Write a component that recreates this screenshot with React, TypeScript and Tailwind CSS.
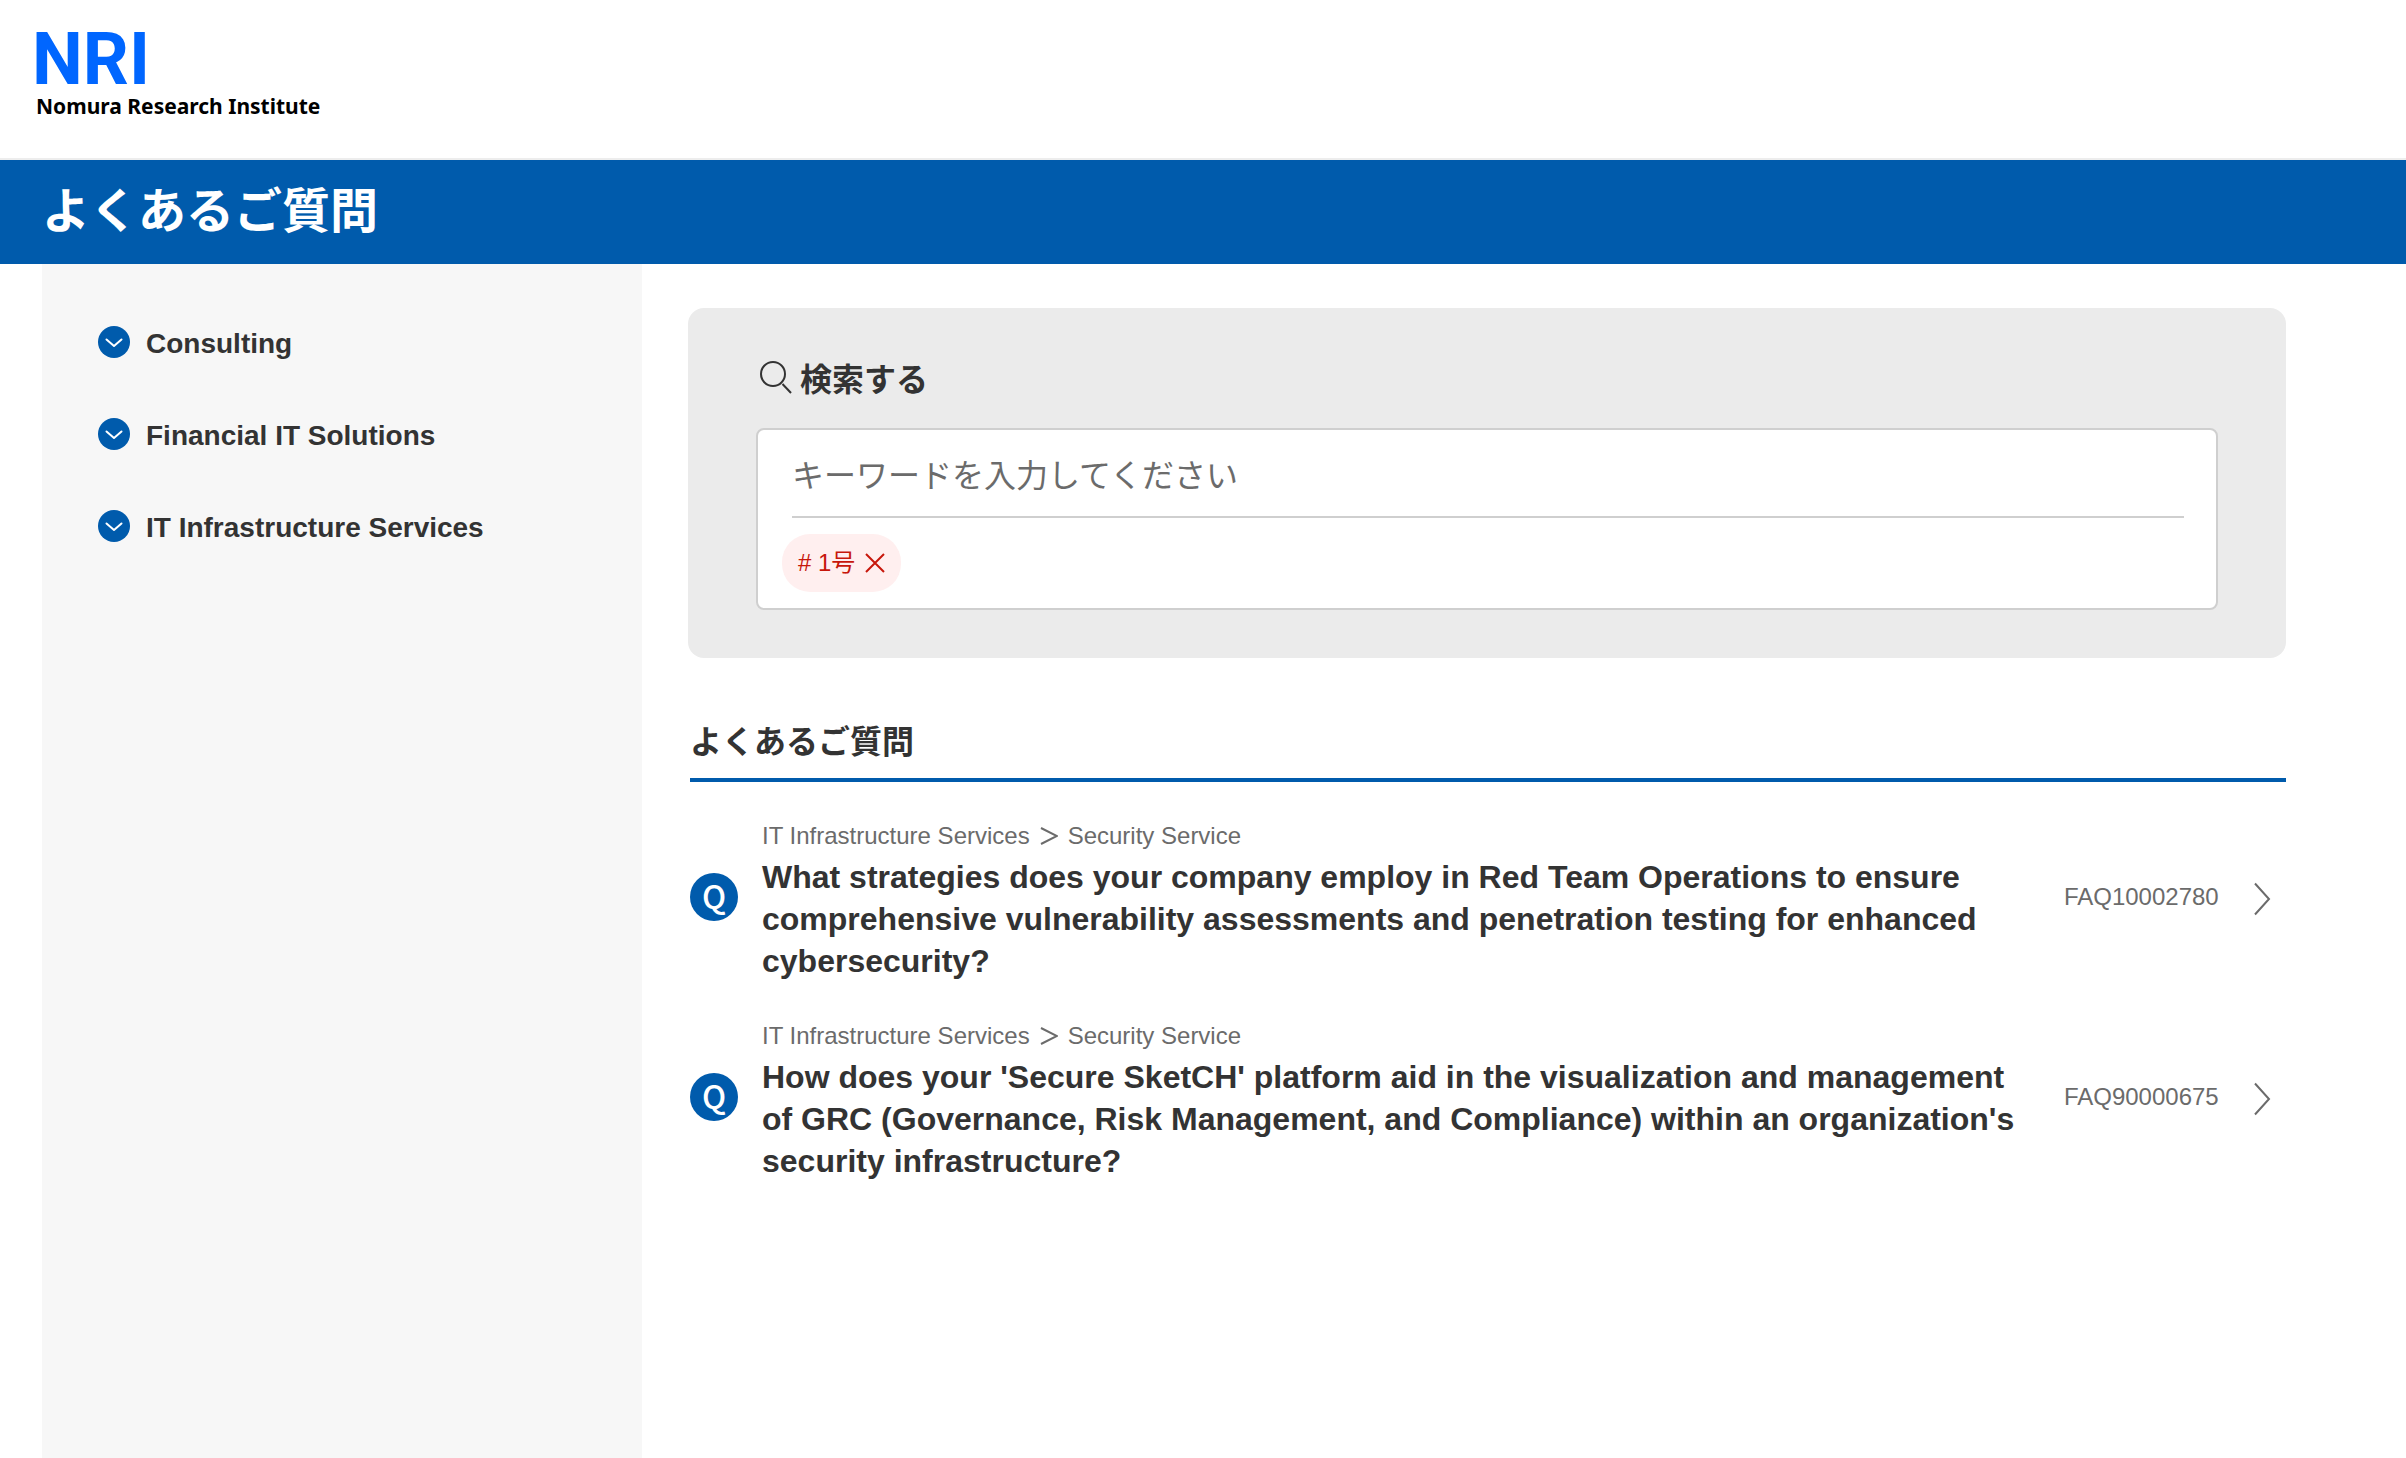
import React from "react";

const categories = ["Consulting", "Financial IT Solutions", "IT Infrastructure Services"];

const faqs = [
  {
    id: "FAQ10002780",
    path: ["IT Infrastructure Services", "Security Service"],
    question:
      "What strategies does your company employ in Red Team Operations to ensure comprehensive vulnerability assessments and penetration testing for enhanced cybersecurity?",
  },
  {
    id: "FAQ90000675",
    path: ["IT Infrastructure Services", "Security Service"],
    question:
      "How does your 'Secure SketCH' platform aid in the visualization and management of GRC (Governance, Risk Management, and Compliance) within an organization's security infrastructure?",
  },
];

function Logo() {
  return (
    <a href="#" className="inline-block text-black">
      <svg
        width="106"
        height="54"
        viewBox="0 0 106 54"
        className="block overflow-visible font-['Roboto',sans-serif] text-[72px] font-bold"
        fill="#0066ff"
      >
        <text x="-4" y="52">NRI</text>
      </svg>
      <span className="mt-[6px] block font-['Noto_Sans',sans-serif] text-[21px] leading-7 font-bold">
        Nomura Research Institute
      </span>
    </a>
  );
}

function SearchIcon() {
  return (
    <svg width="32" height="34" viewBox="0 0 32 34" fill="none" stroke="#333" strokeWidth="2" className="mb-1 shrink-0" aria-hidden="true">
      <circle cx="13" cy="13" r="12" />
      <path d="M22.5 23L31 32" />
    </svg>
  );
}

function FaqItem({ id, path, question }: { id: string; path: string[]; question: string }) {
  return (
    <li>
      <a href={"#" + id} className="flex items-center">
        <span className="mb-1 flex size-12 shrink-0 items-center justify-center rounded-full bg-[#005bac] pb-1 font-['Noto_Sans_CJK_JP',sans-serif] text-[32px] leading-8 font-medium text-white">
          Q
        </span>
        <div className="ml-6 flex-1">
          <p className="flex items-center text-2xl leading-10 text-[#6b6b6b]">
            {path[0]}
            <svg width="18" height="18" viewBox="0 0 18 18" fill="none" stroke="currentColor" strokeWidth="2" className="mx-[10px] shrink-0" aria-hidden="true">
              <path d="M1 1L17 9L1 17" />
            </svg>
            {path[1]}
          </p>
          <h3 className="text-[32px] leading-[42px] font-bold">{question}</h3>
        </div>
        <span className="mb-1 ml-10 text-2xl text-[#6b6b6b]">{id}</span>
        <svg width="18" height="34" viewBox="0 0 18 34" fill="none" stroke="#6b6b6b" strokeWidth="2" className="mr-[15px] ml-[34px] shrink-0" aria-hidden="true">
          <path d="M2 1.5L16 17L2 32.5" />
        </svg>
      </a>
    </li>
  );
}

export default function App() {
  return (
    <div className="flex min-h-screen flex-col bg-white font-['Liberation_Sans','Noto_Sans_CJK_JP',sans-serif] text-[#333]">
      <header className="h-40 border-b-2 border-[#ededed] px-9 pt-8">
        <Logo />
      </header>

      <div className="flex h-26 items-center bg-[#005bac] px-[42px]">
        <h1 className="text-5xl leading-none font-bold text-white">よくあるご質問</h1>
      </div>

      <div className="flex flex-1 pr-[5%] pl-[42px]">
        <nav className="w-[600px] shrink-0 bg-[#f7f7f7] px-14 pt-[60px]">
          <ul className="flex flex-col gap-13">
            {categories.map((name) => (
              <li key={name}>
                <button type="button" className="flex h-10 items-center gap-4 text-left text-[28px] leading-9 font-bold">
                  <svg width="32" height="32" viewBox="0 0 32 32" fill="none" className="mb-1 shrink-0" aria-hidden="true">
                    <circle cx="16" cy="16" r="16" fill="#005bac" />
                    <path d="M8.5 13.5L16 20L23.5 13.5" stroke="#fff" strokeWidth="2" strokeLinecap="round" strokeLinejoin="round" />
                  </svg>
                  {name}
                </button>
              </li>
            ))}
          </ul>
        </nav>

        <main className="min-w-0 flex-1 pt-11 pl-[46px]">
          <section className="rounded-2xl bg-[#ebebeb] px-[68px] py-12">
            <label htmlFor="keyword" className="flex h-12 items-center gap-2 pl-1 text-[32px] leading-[48px] font-bold">
              <SearchIcon />
              検索する
            </label>
            <div className="mt-6 rounded-lg border-2 border-[#cfcfcf] bg-white pr-8 pb-4 pl-[34px]">
              <input
                id="keyword"
                type="text"
                placeholder="キーワードを入力してください"
                className="block h-22 w-full border-b-2 border-[#cfcfcf] bg-transparent pt-[6px] text-[32px] outline-none placeholder:text-[#6b6b6b]"
              />
              <button
                type="button"
                className="mt-4 -ml-[10px] flex h-[58px] items-center gap-[10px] rounded-[28px] bg-[#ffefef] px-4 text-2xl text-[#c7170b]"
              >
                # 1号
                <svg width="20" height="20" viewBox="0 0 20 20" fill="none" stroke="currentColor" strokeWidth="2" aria-hidden="true">
                  <path d="M1 1L19 19M19 1L1 19" />
                </svg>
              </button>
            </div>
          </section>

          <section className="ml-[2px] pt-14">
            <h2 className="border-b-4 border-[#005bac] pb-2 text-[32px] leading-[56px] font-bold">よくあるご質問</h2>
            <ul className="mt-[34px] flex flex-col gap-[34px]">
              {faqs.map((faq) => (
                <FaqItem key={faq.id} {...faq} />
              ))}
            </ul>
          </section>
        </main>
      </div>
    </div>
  );
}
